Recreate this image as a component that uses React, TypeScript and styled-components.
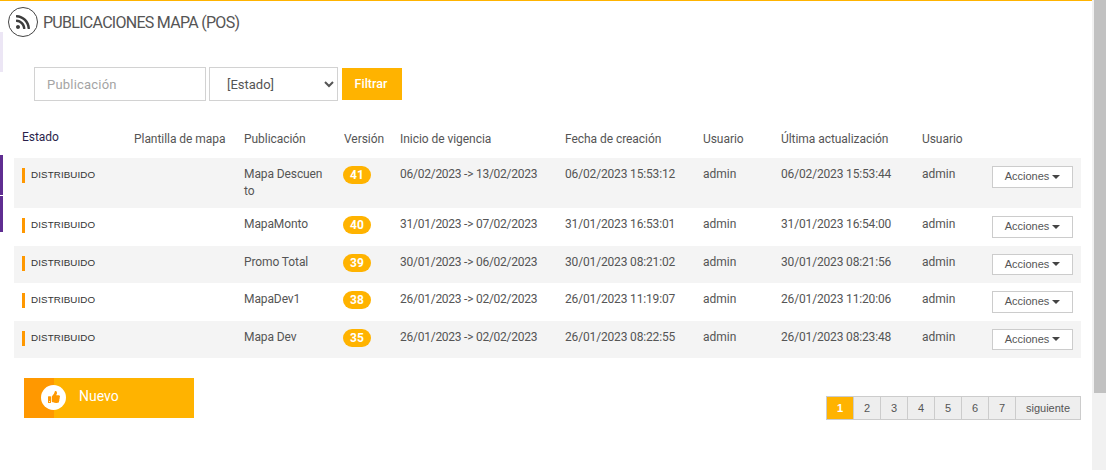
import React from "react";
import styled, { createGlobalStyle } from "styled-components";
import { FaRss, FaThumbsUp } from "react-icons/fa";

const Global = createGlobalStyle`
  html, body { margin: 0; padding: 0; height: 470px; overflow: hidden; background: #fff; }
  body { font-family: Roboto, "Liberation Sans", Arial, sans-serif; }
  * { box-sizing: border-box; }
`;

const COLUMNS = "112px 110px 100px 56px 165px 138px 78px 141px 70px 97px";

const Page = styled.div`
  display: flex;
  width: 1106px;
  height: 470px;
`;
const Viewport = styled.div`
  flex: none;
  width: 1092px;
  height: 470px;
  border-top: 1px solid #ffb300;
  display: flex;
`;
const Rail = styled.div`
  flex: none;
  width: 3px;
  display: flex;
  flex-direction: column;
`;
const RailMark = styled.div<{ $top: number; $h: number; $c: string }>`
  margin-top: ${(p) => p.$top}px;
  height: ${(p) => p.$h}px;
  background: ${(p) => p.$c};
`;
const Main = styled.main`
  flex: 1;
  min-width: 0;
  display: flex;
  flex-direction: column;
`;
const Header = styled.header`
  display: flex;
  align-items: center;
  gap: 5px;
  margin: 5px 0 0 5px;
  height: 31px;
`;
const IconRing = styled.span`
  flex: none;
  width: 30px;
  height: 30px;
  border: 1px solid #444;
  border-radius: 50%;
  display: flex;
  align-items: center;
  justify-content: center;
  color: #3d3d3d;
  font-size: 16px;
`;
const Title = styled.h1`
  margin: 2px 0 0;
  font-size: 16px;
  font-weight: 400;
  color: #555;
  letter-spacing: -0.72px;
`;
const Filters = styled.form`
  display: flex;
  align-items: center;
  margin: 30px 0 0 31px;
  height: 34px;
`;
const SearchInput = styled.input`
  width: 172px;
  height: 34px;
  border: 1.5px solid #d2d2d2;
  padding: 0 12px;
  font: 13px Roboto, sans-serif;
  letter-spacing: 0.2px;
  color: #555;
  outline: none;
  &::placeholder { color: #a4a4a4; opacity: 1; }
`;
const StateSelect = styled.select`
  width: 129px;
  height: 34px;
  margin-left: 3px;
  border: 1.5px solid #d2d2d2;
  border-radius: 0;
  background-color: #fff;
  padding: 0 13px;
  font: 13px Roboto, sans-serif;
  color: #555;
`;
const FilterButton = styled.button`
  width: 60px;
  height: 32px;
  margin-left: 4px;
  border: 0;
  padding: 0 2px 1px 0;
  background: #ffb300;
  color: #fff;
  font: 500 12.5px Roboto, sans-serif;
`;
const TableWrap = styled.div`
  margin: 25px 0 0 11px;
  width: 1067px;
`;
const HeadRow = styled.div`
  display: grid;
  grid-template-columns: ${COLUMNS};
  height: 32px;
  align-items: start;
`;
const HeadCell = styled.div<{ $dark?: boolean }>`
  padding: ${(p) => (p.$dark ? "3px" : "5px")} 0 0 8px;
  font-size: 12px;
  line-height: 17px;
  letter-spacing: -0.05px;
  color: ${(p) => (p.$dark ? "#2b1f4b" : "#555")};
`;
const Row = styled.div<{ $tall?: boolean; $odd: boolean }>`
  display: grid;
  grid-template-columns: ${COLUMNS};
  height: ${(p) => (p.$tall ? "50px" : "37.5px")};
  background: ${(p) => (p.$odd ? "#f4f4f4" : "#fff")};
`;
const Cell = styled.div<{ $spacing?: number }>`
  padding: 8px 8px 0;
  font-size: 12px;
  line-height: 17px;
  letter-spacing: ${(p) => p.$spacing ?? 0}px;
  color: #555;
`;
const NameCell = styled(Cell)`
  padding-right: 11px;
  letter-spacing: -0.1px;
  word-break: break-all;
`;
const StatusCell = styled.div`
  padding: 10px 0 0 8px;
`;
const Status = styled.span`
  display: block;
  border-left: 3px solid #ff9800;
  padding-left: 6px;
  height: 15px;
  font: 9.8px/14px "Liberation Sans", Arial, sans-serif;
  letter-spacing: 0.1px;
  color: #333;
`;
const VersionCell = styled.div`
  padding: 8px 0 0 7px;
`;
const Badge = styled.span`
  display: block;
  width: 28px;
  height: 18px;
  border-radius: 9px;
  background: #ffb300;
  color: #fff;
  font-size: 12px;
  font-weight: 700;
  line-height: 18px;
  text-align: center;
`;
const ActionCell = styled.div`
  padding: 8px 0 0 8px;
`;
const ActionButton = styled.button`
  display: flex;
  align-items: center;
  justify-content: center;
  gap: 3px;
  width: 81px;
  height: 21.5px;
  border: 1px solid #ccc;
  background: #fff;
  padding: 0 0 1px;
  font: 11px "Liberation Sans", Arial, sans-serif;
  color: #555;
`;
const Caret = styled.span`
  width: 0;
  height: 0;
  margin-top: 1px;
  border-left: 4px solid transparent;
  border-right: 4px solid transparent;
  border-top: 4px solid #444;
`;
const Footer = styled.div`
  display: flex;
  justify-content: space-between;
  align-items: flex-start;
  margin: 20px 0 0 21px;
  width: 1057px;
`;
const NewButton = styled.button`
  display: flex;
  align-items: center;
  width: 170px;
  height: 40px;
  border: 0;
  padding: 0;
  background: linear-gradient(to right, #ff9800 30px, #ffb300 30px);
  color: #fff;
  font: 400 14px Roboto, sans-serif;
`;
const ThumbCircle = styled.span`
  width: 25px;
  height: 25px;
  margin-left: 17px;
  margin-top: -2px;
  border-radius: 50%;
  background: #fff;
  color: #ff9800;
  display: flex;
  align-items: center;
  justify-content: center;
  font-size: 12px;
`;
const NewLabel = styled.span`
  margin-left: 13px;
  margin-top: -4px;
`;
const Pagination = styled.nav`
  display: flex;
  margin-top: 18px;
`;
const PageItem = styled.a<{ $active?: boolean; $wide?: boolean }>`
  height: 24px;
  width: ${(p) => (p.$wide ? "66px" : "28px")};
  margin-left: -1px;
  border: 1px solid #ccc;
  background: ${(p) => (p.$active ? "#ffb300" : "#eee")};
  color: ${(p) => (p.$active ? "#fff" : "#555")};
  font: ${(p) => (p.$active ? 700 : 400)} 11px/22px "Liberation Sans", Arial, sans-serif;
  text-align: center;
  &:first-child { margin-left: 0; }
`;
const Scrollbar = styled.div`
  flex: none;
  width: 14px;
  height: 470px;
  background: #f1f1f1;
  padding-left: 2px;
`;
const Thumb = styled.div`
  height: 393px;
  background: #c1c1c1;
`;

const rows = [
  ["Mapa Descuento", "41", "06/02/2023 -> 13/02/2023", "06/02/2023 15:53:12", "06/02/2023 15:53:44"],
  ["MapaMonto", "40", "31/01/2023 -> 07/02/2023", "31/01/2023 16:53:01", "31/01/2023 16:54:00"],
  ["Promo Total", "39", "30/01/2023 -> 06/02/2023", "30/01/2023 08:21:02", "30/01/2023 08:21:56"],
  ["MapaDev1", "38", "26/01/2023 -> 02/02/2023", "26/01/2023 11:19:07", "26/01/2023 11:20:06"],
  ["Mapa Dev", "35", "26/01/2023 -> 02/02/2023", "26/01/2023 08:22:55", "26/01/2023 08:23:48"],
];

export default function App() {
  return (
    <Page>
      <Global />
      <Viewport>
        <Rail>
          <RailMark $top={31} $h={40} $c="#ece6f5" />
          <RailMark $top={83} $h={40} $c="#5f2d91" />
          <RailMark $top={1} $h={36} $c="#5f2d91" />
        </Rail>
        <Main>
          <Header>
            <IconRing><FaRss /></IconRing>
            <Title>PUBLICACIONES MAPA (POS)</Title>
          </Header>
          <Filters onSubmit={(e) => e.preventDefault()}>
            <SearchInput placeholder="Publicación" />
            <StateSelect defaultValue="">
              <option value="">[Estado]</option>
            </StateSelect>
            <FilterButton>Filtrar</FilterButton>
          </Filters>
          <TableWrap>
            <HeadRow>
              <HeadCell $dark>Estado</HeadCell>
              <HeadCell>Plantilla de mapa</HeadCell>
              <HeadCell>Publicación</HeadCell>
              <HeadCell>Versión</HeadCell>
              <HeadCell>Inicio de vigencia</HeadCell>
              <HeadCell>Fecha de creación</HeadCell>
              <HeadCell>Usuario</HeadCell>
              <HeadCell>Última actualización</HeadCell>
              <HeadCell>Usuario</HeadCell>
              <HeadCell />
            </HeadRow>
            {rows.map((r, i) => (
              <Row key={r[1]} $tall={i === 0} $odd={i % 2 === 0}>
                <StatusCell><Status>DISTRIBUIDO</Status></StatusCell>
                <Cell />
                <NameCell>{r[0]}</NameCell>
                <VersionCell><Badge>{r[1]}</Badge></VersionCell>
                <Cell $spacing={-0.25}>{r[2]}</Cell>
                <Cell $spacing={-0.16}>{r[3]}</Cell>
                <Cell>admin</Cell>
                <Cell $spacing={-0.16}>{r[4]}</Cell>
                <Cell>admin</Cell>
                <ActionCell>
                  <ActionButton>Acciones <Caret /></ActionButton>
                </ActionCell>
              </Row>
            ))}
          </TableWrap>
          <Footer>
            <NewButton>
              <ThumbCircle><FaThumbsUp /></ThumbCircle>
              <NewLabel>Nuevo</NewLabel>
            </NewButton>
            <Pagination>
              {["1", "2", "3", "4", "5", "6", "7"].map((n) => (
                <PageItem key={n} $active={n === "1"}>{n}</PageItem>
              ))}
              <PageItem $wide>siguiente</PageItem>
            </Pagination>
          </Footer>
        </Main>
      </Viewport>
      <Scrollbar><Thumb /></Scrollbar>
    </Page>
  );
}
